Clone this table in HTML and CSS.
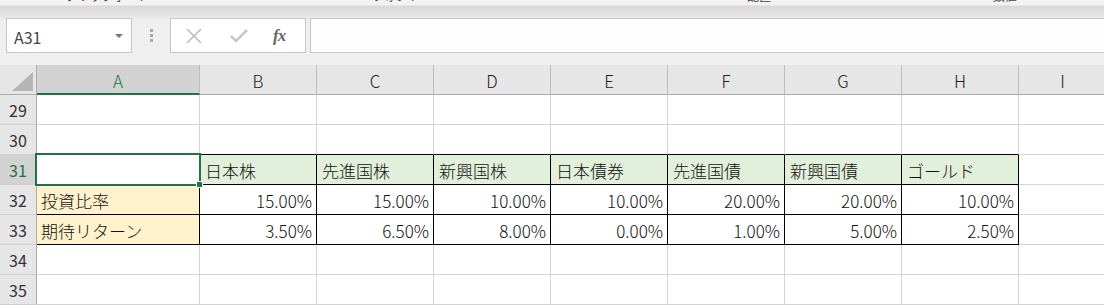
FILE: index.html
```html
<!DOCTYPE html>
<html lang="ja">
<head>
    <meta charset="UTF-8">
    <title>期待リターン</title>
    <link rel="stylesheet" href="styles.css">
</head>
<body>

<div class="ribbon">
    <div class="group g1">クリップボード</div>
    <div class="group g2">フォント</div>
    <div class="group g3">配置</div>
    <div class="group g4">数値</div>
</div>

<div class="formula-area">
    <div class="formula-bar">
        <div class="name-box">
            <span>A31</span>
            <span class="caret"></span>
        </div>
        <div class="grip"><i></i><i></i><i></i></div>
        <div class="fx-box">
            <svg width="16" height="16" viewBox="0 0 16 16">
                <path d="M1 1 L15 15 M15 1 L1 15" stroke="#bdbdbd" stroke-width="1.6" fill="none"/>
            </svg>
            <svg width="18" height="14" viewBox="0 0 18 14">
                <path d="M1 7 L6 12 L17 1" stroke="#c8c8c8" stroke-width="2.6" fill="none"/>
            </svg>
            <span class="fx">fx</span>
        </div>
        <div class="formula-input"></div>
    </div>
</div>

<div class="sheet">
    <div class="corner"><span class="tri"></span></div>
    <div class="col-head active">A</div>
    <div class="col-head">B</div>
    <div class="col-head">C</div>
    <div class="col-head">D</div>
    <div class="col-head">E</div>
    <div class="col-head">F</div>
    <div class="col-head">G</div>
    <div class="col-head">H</div>
    <div class="col-head">I</div>

    <div class="row-head">29</div>
    <div class="cell"></div><div class="cell"></div><div class="cell"></div><div class="cell"></div><div class="cell"></div><div class="cell"></div><div class="cell"></div><div class="cell"></div><div class="cell"></div>

    <div class="row-head">30</div>
    <div class="cell"></div><div class="cell tb-bottom"></div><div class="cell tb-bottom"></div><div class="cell tb-bottom"></div><div class="cell tb-bottom"></div><div class="cell tb-bottom"></div><div class="cell tb-bottom"></div><div class="cell tb-bottom"></div><div class="cell"></div>

    <div class="row-head active">31</div>
    <div class="cell tb selected"></div>
    <div class="cell tb head">日本株</div>
    <div class="cell tb head">先進国株</div>
    <div class="cell tb head">新興国株</div>
    <div class="cell tb head">日本債券</div>
    <div class="cell tb head">先進国債</div>
    <div class="cell tb head">新興国債</div>
    <div class="cell tb head">ゴールド</div>
    <div class="cell"></div>

    <div class="row-head">32</div>
    <div class="cell tb label">投資比率</div>
    <div class="cell tb num">15.00%</div>
    <div class="cell tb num">15.00%</div>
    <div class="cell tb num">10.00%</div>
    <div class="cell tb num">10.00%</div>
    <div class="cell tb num">20.00%</div>
    <div class="cell tb num">20.00%</div>
    <div class="cell tb num">10.00%</div>
    <div class="cell"></div>

    <div class="row-head">33</div>
    <div class="cell tb label">期待リターン</div>
    <div class="cell tb num">3.50%</div>
    <div class="cell tb num">6.50%</div>
    <div class="cell tb num">8.00%</div>
    <div class="cell tb num">0.00%</div>
    <div class="cell tb num">1.00%</div>
    <div class="cell tb num">5.00%</div>
    <div class="cell tb num">2.50%</div>
    <div class="cell"></div>

    <div class="row-head">34</div>
    <div class="cell"></div><div class="cell"></div><div class="cell"></div><div class="cell"></div><div class="cell"></div><div class="cell"></div><div class="cell"></div><div class="cell"></div><div class="cell"></div>

    <div class="row-head">35</div>
    <div class="cell"></div><div class="cell"></div><div class="cell"></div><div class="cell"></div><div class="cell"></div><div class="cell"></div><div class="cell"></div><div class="cell"></div><div class="cell"></div>
</div>

</body>
</html>
```

FILE: styles.css
```css
body {
    margin: 0;
    width: 1104px;
    height: 305px;
    overflow: hidden;
    font-family: "Noto Sans CJK JP", sans-serif;
    background-color: #ffffff;
    color: #222;
}

/* bottom edge of the ribbon, group labels cut off */
.ribbon {
    display: flex;
    height: 5px;
    overflow: hidden;
    background-color: #f3f2f1;
}

.ribbon .group {
    height: 5px;
    font-size: 12px;
    line-height: 12px;
    margin-top: -10px;
    color: #444;
    text-align: center;
    border-right: 1px solid #c8c6c4;
    box-sizing: border-box;
}

.ribbon .g1 { width: 243px; padding-right: 24px; }
.ribbon .g2 { width: 337px; padding-right: 20px; }
.ribbon .g3 { width: 377px; }
.ribbon .g4 { width: 160px; padding-right: 40px; border-right: none; }

/* formula bar */
.formula-area {
    height: 60px;
    background: linear-gradient(#d8d8d8, #e9e9e9 12px, #efefef 14px, #efefef);
    border-top: 1px solid #e6e6e6;
    box-sizing: border-box;
    padding-top: 12px;
}

.formula-bar {
    display: flex;
    height: 35px;
    padding-left: 6px;
}

.name-box {
    width: 126px;
    box-sizing: border-box;
    border: 1px solid #c6c6c6;
    background-color: #fff;
    display: flex;
    align-items: center;
    justify-content: space-between;
    padding: 2px 8px 0 7px;
    font-size: 16px;
    color: #444;
}

.name-box .caret {
    width: 0;
    height: 0;
    border-left: 4px solid transparent;
    border-right: 4px solid transparent;
    border-top: 4px solid #777;
    margin-top: -2px;
}

.grip {
    width: 38px;
    display: flex;
    flex-direction: column;
    align-items: center;
    justify-content: center;
    gap: 2px;
}

.grip i {
    width: 3px;
    height: 3px;
    background-color: #a8a8a8;
}

.fx-box {
    width: 136px;
    box-sizing: border-box;
    border: 1px solid #c6c6c6;
    background-color: #fff;
    display: flex;
    align-items: center;
    padding-left: 15px;
    gap: 0;
}

.fx-box svg:first-child {
    margin-right: 28px;
}

.fx-box svg:nth-child(2) {
    margin-right: 25px;
}

.fx {
    font-family: "Liberation Serif", serif;
    font-style: italic;
    font-weight: bold;
    font-size: 17px;
    color: #666;
    letter-spacing: -1px;
}

.formula-input {
    flex: 1;
    margin-left: 4px;
    margin-right: -10px;
    border: 1px solid #c6c6c6;
    background-color: #fdfdfd;
}

/* worksheet grid */
.sheet {
    display: grid;
    grid-template-columns: 37px 163px repeat(7, 117px) 88px;
    grid-auto-rows: 30px;
}

.corner {
    background-color: #e6e6e6;
    border-right: 1px solid #ababab;
    border-bottom: 1px solid #ababab;
    display: flex;
    align-items: flex-end;
    justify-content: flex-end;
    padding: 0 3px 3px 0;
}

.corner .tri {
    width: 0;
    height: 0;
    border-left: 21px solid transparent;
    border-bottom: 19px solid #b5b5b5;
}

.col-head {
    background-color: #e6e6e6;
    border-right: 1px solid #bcbcbc;
    border-bottom: 1px solid #ababab;
    display: flex;
    align-items: center;
    justify-content: center;
    font-size: 17px;
    font-weight: 300;
    color: #222;
    padding-top: 2px;
}

.col-head.active {
    background-color: #d2d2d2;
    color: #217346;
    border-bottom: 2px solid #217346;
}

.row-head {
    background-color: #e6e6e6;
    border-right: 1px solid #ababab;
    border-bottom: 1px solid #cfcfcf;
    display: flex;
    align-items: center;
    justify-content: center;
    font-size: 16px;
    color: #333;
}

.row-head.active {
    background-color: #d2d2d2;
    color: #217346;
}

.cell {
    border-right: 1px solid #d4d4d4;
    border-bottom: 1px solid #d4d4d4;
    display: flex;
    align-items: center;
    padding: 1px 4px 0 4px;
    font-size: 17px;
    font-weight: 300;
    color: #111;
    white-space: nowrap;
    overflow: hidden;
}

.cell.tb-bottom {
    border-bottom-color: #000;
}

.cell.tb {
    border-right-color: #000;
    border-bottom-color: #000;
}

.cell.head {
    background-color: #e2efda;
    padding-left: 5px;
}

.cell.label {
    background-color: #fff2cc;
}

.cell.num {
    justify-content: flex-end;
}

/* active cell outline with fill handle */
.cell.selected {
    position: relative;
    overflow: visible;
}

.cell.selected::after {
    content: "";
    position: absolute;
    left: -2px;
    top: -2px;
    right: -2px;
    bottom: -2px;
    border: 2px solid #217346;
}

.cell.selected::before {
    content: "";
    position: absolute;
    right: -4px;
    bottom: -4px;
    width: 5px;
    height: 5px;
    background-color: #217346;
    border: 1px solid #fff;
    z-index: 1;
}
```
